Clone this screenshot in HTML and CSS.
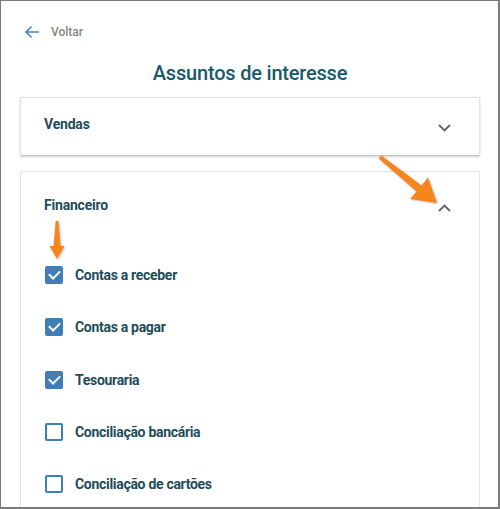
FILE: index.html
```html
<!DOCTYPE html>
<html lang="pt">
<head>
    <meta charset="UTF-8">
    <title>Assuntos de interesse</title>
    <link rel="stylesheet" href="styles.css">
</head>
<body>
    <div class="screen">
        <a class="back-link" href="#">
            <svg width="16" height="14" viewBox="0 0 16 14"><path d="M15 7H2M7.5 1.5L2 7l5.5 5.5" fill="none" stroke="#4a86bd" stroke-width="1.6"/></svg>
            <span>Voltar</span>
        </a>

        <h1 class="page-title">Assuntos de interesse</h1>

        <!-- Vendas (closed) -->
        <div class="panel">
            <div class="panel-header">
                <span class="panel-title">Vendas</span>
                <svg class="chevron" width="13" height="8" viewBox="0 0 13 8"><path d="M1 1l5.5 5.5L12 1" fill="none" stroke="#5f6368" stroke-width="1.8"/></svg>
            </div>
        </div>

        <!-- Financeiro (open) -->
        <div class="panel panel-open">
            <div class="panel-header panel-header-tall">
                <span class="panel-title">Financeiro</span>
                <svg class="chevron chevron-up" width="13" height="8" viewBox="0 0 13 8"><path d="M1 7l5.5-5.5L12 7" fill="none" stroke="#5f6368" stroke-width="1.8"/></svg>
            </div>
            <ul class="check-list">
                <li class="check-item"><span class="box checked"></span>Contas a receber</li>
                <li class="check-item"><span class="box checked"></span>Contas a pagar</li>
                <li class="check-item"><span class="box checked"></span>Tesouraria</li>
                <li class="check-item"><span class="box"></span>Conciliação bancária</li>
                <li class="check-item"><span class="box"></span>Conciliação de cartões</li>
            </ul>
        </div>

        <!-- annotation arrows -->
        <svg class="annotations" width="500" height="509" viewBox="0 0 500 509">
            <polygon points="381.3,155.4 421.5,185.4 428,177.6 437,203 410,199 416.5,191.6 378.7,158.6" fill="#f7841c"/>
            <polygon points="55.6,221 58.4,221 60.5,246 64.5,246 57,259 49.5,246 53.5,246" fill="#f7841c"/>
        </svg>
    </div>
</body>
</html>
```

FILE: styles.css
```css
* {
    box-sizing: border-box;
    margin: 0;
    padding: 0;
}

body {
    background-color: #ffffff;
    font-family: 'Roboto', 'Liberation Sans', sans-serif;
}

.screen {
    position: relative;
    width: 500px;
    height: 509px;
    overflow: hidden;
    background-color: #ffffff;
    border-top: 1px solid #7b7b7b;
    border-left: 1px solid #7b7b7b;
    border-right: 2px solid #7b7b7b;
    border-bottom: 2px solid #7b7b7b;
    padding: 0 18px 0 19px;
}

.back-link {
    display: flex;
    align-items: center;
    gap: 11px;
    margin-top: 23px;
    margin-left: 4px;
    height: 16px;
    text-decoration: none;
    color: #858585;
    font-size: 12px;
    font-weight: 500;
}

.page-title {
    text-align: center;
    font-size: 20px;
    font-weight: 500;
    color: #175a6a;
    letter-spacing: -0.2px;
    margin-top: 20px;
    line-height: 26px;
}

.panel {
    border: 1px solid #e4e4e4;
    border-bottom-color: #c4c4c4;
    box-shadow: 0 1px 2px rgba(0, 0, 0, 0.18);
    background-color: #ffffff;
    margin-top: 11px;
}

.panel-open {
    margin-top: 15px;
    border-bottom: none;
    box-shadow: none;
}

.panel-header {
    display: flex;
    justify-content: space-between;
    align-items: center;
    height: 57px;
    padding: 0 28px 0 23px;
}

.panel-header-tall {
    height: 66px;
}

.panel-title {
    font-size: 14px;
    font-weight: 700;
    color: #1e4c5b;
    letter-spacing: -0.2px;
    margin-top: -5px;
}

.panel-header-tall .panel-title {
    margin-top: 0;
}

.chevron {
    margin-top: 2px;
}

.chevron-up {
    margin-top: 6px;
}

.check-list {
    list-style: none;
    padding: 11px 0 0 24px;
}

.check-item {
    display: flex;
    align-items: center;
    gap: 12px;
    height: 52.3px;
    font-size: 14px;
    font-weight: 700;
    color: #1e4c5b;
    letter-spacing: -0.3px;
}

.box {
    width: 18px;
    height: 18px;
    border: 2px solid #3f7fb6;
    border-radius: 2px;
    position: relative;
}

.box.checked {
    background-color: #3f7fb6;
}

.box.checked::after {
    content: '';
    position: absolute;
    left: 4px;
    top: 0px;
    width: 5px;
    height: 9px;
    border-right: 2px solid #ffffff;
    border-bottom: 2px solid #ffffff;
    transform: rotate(45deg);
}

.annotations {
    position: absolute;
    left: -1px;
    top: -1px;
    filter: drop-shadow(1px 1px 1px rgba(0, 0, 0, 0.25));
    pointer-events: none;
}
```
